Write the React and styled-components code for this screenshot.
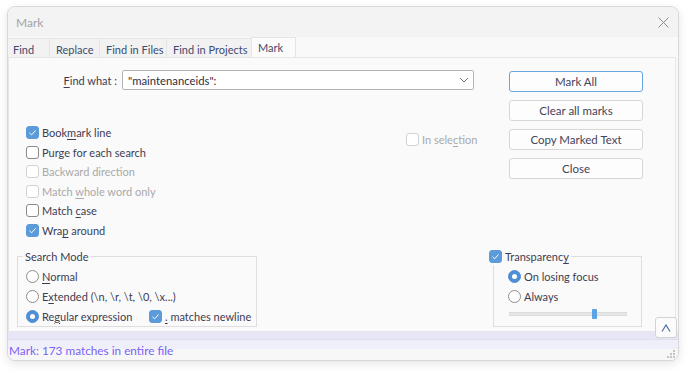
import React from "react";
import styled, { createGlobalStyle } from "styled-components";

const Global = createGlobalStyle`
  html, body { margin: 0; padding: 0; background: #fff; }
  body {
    font-family: Lato, "Noto Sans", sans-serif;
    font-size: 11px;
    color: #3d3d52;
  }
  * { box-sizing: border-box; }
`;

const Page = styled.div`
  width: 692px;
  height: 373px;
  padding: 6px 0 0 7px;
`;

const Window = styled.div`
  position: relative;
  width: 672px;
  height: 355px;
  border: 1px solid #d8d8d8;
  border-radius: 8px;
  background: #f9f9f9;
  box-shadow: 0 3px 10px rgba(0, 0, 0, 0.1);
  display: flex;
  flex-direction: column;
  overflow: hidden;
`;

const TitleBar = styled.div`
  height: 30px;
  flex: none;
  background: #f3f3f3;
  display: flex;
  align-items: center;
  justify-content: space-between;
  padding: 0 9px 0 8px;
  color: #a3a3a3;
  font-size: 12px;
`;

const TabStrip = styled.div`
  height: 20px;
  flex: none;
  display: flex;
  align-items: flex-end;
  background: #f9f9f9;
`;

const Tab = styled.div`
  width: ${(p) => p.w}px;
  height: ${(p) => (p.active ? 20 : 19)}px;
  padding: ${(p) => (p.active ? "0" : "2px")} 0 0 6px;
  display: flex;
  align-items: center;
  background: ${(p) => (p.active ? "#fbfbfb" : "#f2f2f2")};
  border: 1px solid #e5e5e5;
  border-bottom: none;
  border-left: ${(p) => (p.first ? "none" : "1px solid #e5e5e5")};
  margin-left: -1px;
  color: ${(p) => (p.active ? "#4a4a66" : "#3f4a70")};
  font-size: 11px;
  white-space: nowrap;
`;

const Panel = styled.div`
  position: relative;
  height: 275px;
  flex: none;
  margin-right: 2px;
  border: 1px solid #e6e6e6;
  background: #fafafa;
`;

const TopArea = styled.div`
  display: flex;
  padding-top: 12px;
`;

const LeftCol = styled.div`
  width: 500px;
`;

const FindRow = styled.div`
  display: flex;
  align-items: center;
  height: 20px;
`;

const FieldLabel = styled.div`
  width: 113px;
  padding-right: 5px;
  text-align: right;
  white-space: nowrap;
`;

const Combo = styled.div`
  width: 352px;
  height: 20px;
  border: 1px solid #b3b3b3;
  border-radius: 2px;
  background: #fff;
  display: flex;
  align-items: center;
  justify-content: space-between;
  padding: 0 4px 0 5px;
  color: #2e2e40;
  font-size: 11.3px;
`;

const Options = styled.div`
  display: flex;
  margin-top: 33px;
`;

const CheckList = styled.div`
  width: 397px;
  padding-left: 17px;
`;

const Item = styled.div`
  display: flex;
  align-items: center;
  gap: 3px;
  height: ${(p) => p.h || 19.5}px;
  width: ${(p) => (p.w ? `${p.w}px` : "auto")};
  margin-top: ${(p) => p.mt || 0}px;
  color: ${(p) => (p.disabled ? "#a9a9a9" : "inherit")};
  white-space: nowrap;
`;

const Box = styled.span`
  flex: none;
  width: 13px;
  height: 13px;
  border-radius: 3px;
  border: 1px solid
    ${(p) => (p.checked ? "#5b9bd9" : p.disabled ? "#d2d2d2" : "#8a8a8a")};
  background: ${(p) => (p.checked ? "#5b9bd9" : "#fff")};
  display: flex;
  align-items: center;
  justify-content: center;
`;

const Round = styled.span`
  flex: none;
  width: 13px;
  height: 13px;
  border-radius: 50%;
  border: 1px solid ${(p) => (p.checked ? "#4f8fd6" : "#8d8d8d")};
  background: ${(p) => (p.checked ? "#4f8fd6" : "#fff")};
  display: flex;
  align-items: center;
  justify-content: center;
  &::after {
    content: "";
    display: ${(p) => (p.checked ? "block" : "none")};
    width: 5px;
    height: 5px;
    border-radius: 50%;
    background: #fff;
  }
`;

const Mn = styled.span`
  text-decoration: underline;
  text-underline-offset: 2px;
`;

const RightCol = styled.div`
  width: 134px;
  padding-top: 1px;
  display: flex;
  flex-direction: column;
  gap: 8px;
`;

const Button = styled.div`
  height: 21px;
  border: 1px solid ${(p) => (p.primary ? "#6aa6de" : "#d6d6d6")};
  border-radius: 3px;
  background: #fdfdfd;
  display: flex;
  align-items: center;
  justify-content: center;
  color: #44445a;
  font-size: 11.5px;
`;

const Bottom = styled.div`
  display: flex;
  align-items: flex-start;
  padding-left: 8px;
  margin-top: 8px;
`;

const Group = styled.fieldset`
  margin: 0 0 0 ${(p) => p.ml || 0}px;
  width: ${(p) => p.w}px;
  height: 79px;
  padding: 1px 0 0 ${(p) => p.pl}px;
  border: 1px solid #dedede;
  min-width: 0;
`;

const Legend = styled.legend`
  padding: 0 2px;
  margin-left: ${(p) => p.ml}px;
  display: flex;
  align-items: center;
  gap: 3px;
  height: 17px;
  color: #3d3d52;
`;

const RadioRow = styled.div`
  display: flex;
  align-items: center;
  height: 20px;
`;

const Slider = styled.div`
  position: relative;
  width: 118px;
  height: 10px;
  margin: 3px 0 0 1px;
`;

const Track = styled.div`
  position: absolute;
  left: 0;
  right: 0;
  top: 3px;
  height: 4px;
  background: #e6e6e6;
  border: 1px solid #dcdcdc;
`;

const Thumb = styled.div`
  position: absolute;
  top: 0;
  left: ${(p) => p.pos}px;
  width: 5px;
  height: 10px;
  background: #5ca3e6;
  border-radius: 1px;
`;

const UpButton = styled.div`
  position: absolute;
  left: 647px;
  top: 310px;
  width: 22px;
  height: 21px;
  border: 1px solid #d3d3d3;
  border-radius: 3px;
  background: #fbfbfb;
  display: flex;
  align-items: center;
  justify-content: center;
  z-index: 2;
`;

const Status = styled.div`
  position: relative;
  flex: 1;
  padding: 12px 0 0 1px;
  line-height: 14px;
  color: #7a60f7;
  font-size: 11.8px;
  background: linear-gradient(
    to bottom,
    #e6e6f6 0,
    #e6e6f6 7px,
    #dedeee 7px,
    #dedeee 8px,
    #efeff9 8px,
    #efeff9 17px,
    #f7f7f7 17px
  );
`;

const Grip = styled.svg`
  position: absolute;
  right: 2px;
  bottom: 1px;
`;

const Check = () => (
  <svg width="9" height="9" viewBox="0 0 9 9">
    <path d="M1.5 4.8 L3.6 6.8 L7.6 2.4" fill="none" stroke="#fff" strokeWidth="1" />
  </svg>
);

const CheckItem = ({ checked, disabled, children, ...rest }) => (
  <Item disabled={disabled} {...rest}>
    <Box checked={checked} disabled={disabled}>
      {checked && <Check />}
    </Box>
    <span>{children}</span>
  </Item>
);

const RadioItem = ({ checked, children, w }) => (
  <Item h={20} w={w}>
    <Round checked={checked} />
    <span>{children}</span>
  </Item>
);

const tabs = [
  ["Find", 43],
  ["Replace", 51],
  ["Find in Files", 68],
  ["Find in Projects", 86],
  ["Mark", 45],
];

export default function App() {
  return (
    <Page>
      <Global />
      <Window>
        <TitleBar>
          <span>Mark</span>
          <svg width="11" height="11" viewBox="0 0 11 11">
            <path d="M0.5 0.5 L10.5 10.5 M10.5 0.5 L0.5 10.5" stroke="#8c8c8c" strokeWidth="1" />
          </svg>
        </TitleBar>
        <TabStrip>
          {tabs.map(([t, w], i) => (
            <Tab key={t} w={w} first={i === 0} active={t === "Mark"}>
              {t}
            </Tab>
          ))}
        </TabStrip>
        <Panel>
          <TopArea>
            <LeftCol>
              <FindRow>
                <FieldLabel>
                  <Mn>F</Mn>ind what :
                </FieldLabel>
                <Combo>
                  <span>"maintenanceids":</span>
                  <svg width="10" height="6" viewBox="0 0 10 6">
                    <path d="M1 1 L5 5 L9 1" fill="none" stroke="#777" strokeWidth="1" />
                  </svg>
                </Combo>
              </FindRow>
              <Options>
                <CheckList>
                  <CheckItem checked>
                    Book<Mn>m</Mn>ark line
                  </CheckItem>
                  <CheckItem>Purge for each search</CheckItem>
                  <CheckItem disabled>Backward direction</CheckItem>
                  <CheckItem disabled>
                    Match <Mn>w</Mn>hole word only
                  </CheckItem>
                  <CheckItem>
                    Match <Mn>c</Mn>ase
                  </CheckItem>
                  <CheckItem checked>
                    Wra<Mn>p</Mn> around
                  </CheckItem>
                </CheckList>
                <CheckItem disabled mt={9.5} h={13}>
                  In sele<Mn>c</Mn>tion
                </CheckItem>
              </Options>
            </LeftCol>
            <RightCol>
              <Button primary>Mark All</Button>
              <Button>Clear all marks</Button>
              <Button>Copy Marked Text</Button>
              <Button>Close</Button>
            </RightCol>
          </TopArea>
          <Bottom>
            <Group w={240} pl={8}>
              <Legend ml={-3}>Search Mode</Legend>
              <RadioItem>
                <Mn>N</Mn>ormal
              </RadioItem>
              <RadioItem>
                E<Mn>x</Mn>tended (\n, \r, \t, \0, \x...)
              </RadioItem>
              <RadioRow>
                <RadioItem checked w={123}>
                  Re<Mn>g</Mn>ular expression
                </RadioItem>
                <CheckItem checked h={20}>
                  <Mn>.</Mn> matches newline
                </CheckItem>
              </RadioRow>
            </Group>
            <Group w={149} pl={14} ml={236}>
              <Legend ml={-21}>
                <Box checked>
                  <Check />
                </Box>
                <span>
                  Transparenc<Mn>y</Mn>
                </span>
              </Legend>
              <RadioItem checked>On losing focus</RadioItem>
              <RadioItem>Always</RadioItem>
              <Slider>
                <Track />
                <Thumb pos={83} />
              </Slider>
            </Group>
          </Bottom>
        </Panel>
        <UpButton>
          <svg width="10" height="8" viewBox="0 0 10 8">
            <path d="M1 7.5 L5 1 L9 7.5" fill="none" stroke="#4a6ea8" strokeWidth="1.2" />
          </svg>
        </UpButton>
        <Status>
          Mark: 173 matches in entire file
          <Grip width="10" height="10" viewBox="0 0 10 10">
            {[
              [7, 1],
              [4, 4],
              [7, 4],
              [1, 7],
              [4, 7],
              [7, 7],
            ].map(([x, y]) => (
              <rect key={`${x}-${y}`} x={x} y={y} width="2" height="2" fill="#c4c4c4" />
            ))}
          </Grip>
        </Status>
      </Window>
    </Page>
  );
}
